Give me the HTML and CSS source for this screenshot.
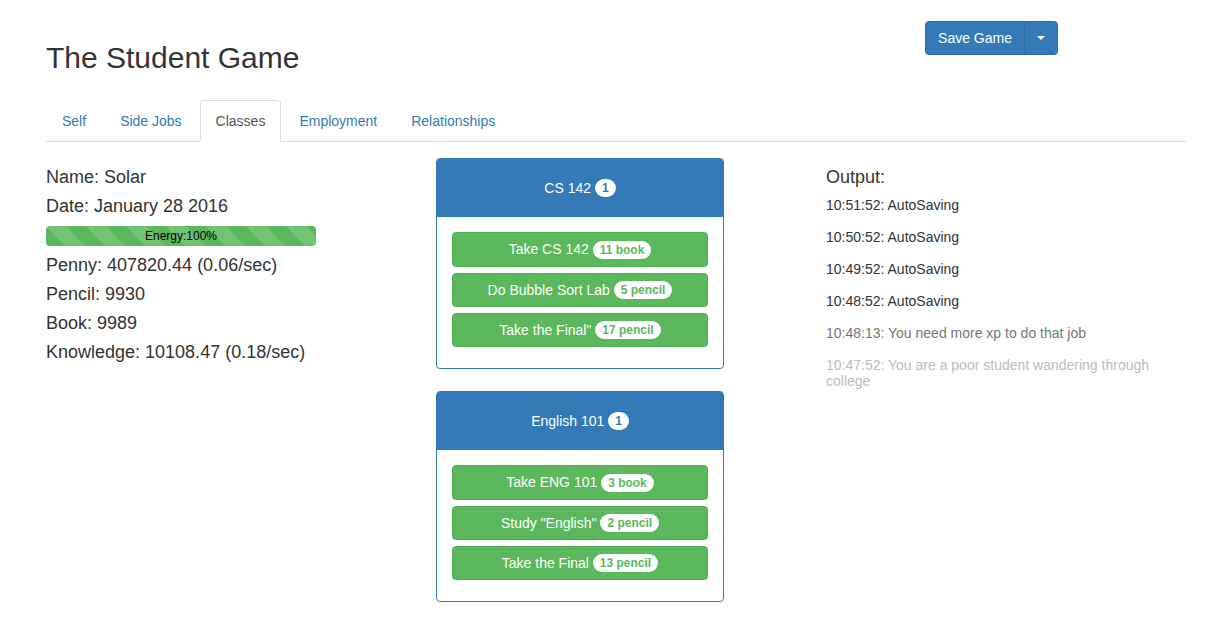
FILE: index.html
```html
<!DOCTYPE html>
<html>
<head>
<meta charset="utf-8">
<title>The Student Game</title>
<link rel="stylesheet" href="styles.css">
</head>
<body>
<div class="container">
  <header class="header">
    <h1 class="title">The Student Game</h1>
    <div class="btn-group">
      <button class="btn btn-primary btn-save">Save Game</button>
      <button class="btn btn-primary btn-toggle"><span class="caret"></span></button>
    </div>
  </header>

  <ul class="nav-tabs">
    <li class="tab"><a href="#">Self</a></li>
    <li class="tab"><a href="#">Side Jobs</a></li>
    <li class="tab active"><a href="#">Classes</a></li>
    <li class="tab"><a href="#">Employment</a></li>
    <li class="tab"><a href="#">Relationships</a></li>
  </ul>

  <div class="content">
    <div class="col stats">
      <div class="stat">Name: Solar</div>
      <div class="stat">Date: January 28 2016</div>
      <div class="progress"><div class="progress-bar" style="width:100%">Energy:100%</div></div>
      <div class="stat">Penny: 407820.44 (0.06/sec)</div>
      <div class="stat">Pencil: 9930</div>
      <div class="stat">Book: 9989</div>
      <div class="stat">Knowledge: 10108.47 (0.18/sec)</div>
    </div>

    <div class="col classes">
      <div class="panel">
        <div class="panel-heading">CS 142 <span class="badge badge-head">1</span></div>
        <div class="panel-body">
          <button class="btn btn-success">Take CS 142 <span class="badge badge-btn">11 book</span></button>
          <button class="btn btn-success">Do Bubble Sort Lab <span class="badge badge-btn">5 pencil</span></button>
          <button class="btn btn-success">Take the Final" <span class="badge badge-btn">17 pencil</span></button>
        </div>
      </div>
      <div class="panel">
        <div class="panel-heading">English 101 <span class="badge badge-head">1</span></div>
        <div class="panel-body">
          <button class="btn btn-success">Take ENG 101 <span class="badge badge-btn">3 book</span></button>
          <button class="btn btn-success">Study "English" <span class="badge badge-btn">2 pencil</span></button>
          <button class="btn btn-success">Take the Final <span class="badge badge-btn">13 pencil</span></button>
        </div>
      </div>
    </div>

    <div class="col output">
      <div class="stat">Output:</div>
      <p class="log">10:51:52: AutoSaving</p>
      <p class="log">10:50:52: AutoSaving</p>
      <p class="log">10:49:52: AutoSaving</p>
      <p class="log">10:48:52: AutoSaving</p>
      <p class="log log-old">10:48:13: You need more xp to do that job</p>
      <p class="log log-older">10:47:52: You are a poor student wandering through college</p>
    </div>
  </div>
</div>
</body>
</html>
```

FILE: styles.css
```css
* { box-sizing: border-box; }

html, body {
  margin: 0;
  padding: 0;
  background: #fff;
}

body {
  font-family: "Liberation Sans", Arial, Helvetica, sans-serif;
  font-size: 14px;
  line-height: 20px;
  color: #333;
}

.container {
  width: 1140px;
  margin-left: 46px;
}

.header {
  display: flex;
  justify-content: space-between;
  align-items: flex-start;
  padding-top: 21px;
  margin-bottom: 26px;
}

.title {
  margin: 20px 0 0 0;
  font-size: 30px;
  line-height: 33px;
  font-weight: 500;
  color: #333;
}

.btn-group {
  display: flex;
  margin-right: 128px;
}

.btn {
  font-family: inherit;
  font-size: 14px;
  line-height: 20px;
  padding: 6px 12px;
  border: 1px solid transparent;
  border-radius: 4px;
  cursor: pointer;
  color: #fff;
}

.btn-primary {
  background: #337ab7;
  border-color: #2e6da4;
}

.btn-save {
  border-radius: 4px 0 0 4px;
}

.btn-toggle {
  border-radius: 0 4px 4px 0;
  margin-left: -1px;
  padding: 6px 12px;
  display: flex;
  align-items: center;
}

.caret {
  display: inline-block;
  width: 0;
  height: 0;
  border-top: 4px solid #fff;
  border-left: 4px solid transparent;
  border-right: 4px solid transparent;
}

.nav-tabs {
  display: flex;
  list-style: none;
  margin: 0;
  padding: 0;
  border-bottom: 1px solid #ddd;
}

.tab {
  margin-bottom: -1px;
}

.tab a {
  display: block;
  padding: 10px 15px;
  line-height: 20px;
  margin-right: 2px;
  border: 1px solid transparent;
  border-radius: 4px 4px 0 0;
  color: #337ab7;
  text-decoration: none;
}

.tab.active a {
  color: #555;
  background: #fff;
  border-color: #ddd #ddd transparent;
}

.content {
  display: grid;
  grid-template-columns: 360px 360px 360px;
  column-gap: 30px;
  margin-top: 16px;
}

.stat {
  font-size: 18px;
  line-height: 19px;
  margin: 10px 0;
}

.progress {
  width: 270px;
  height: 20px;
  margin: 10px 0;
  background: #f5f5f5;
  border-radius: 4px;
  overflow: hidden;
}

.progress-bar {
  height: 20px;
  background-color: #5cb85c;
  background-image: linear-gradient(45deg, rgba(255,255,255,.15) 25%, transparent 25%, transparent 50%, rgba(255,255,255,.15) 50%, rgba(255,255,255,.15) 75%, transparent 75%, transparent);
  background-size: 40px 40px;
  color: #000;
  font-size: 12px;
  line-height: 20px;
  text-align: center;
}

.panel {
  width: 288px;
  border: 1px solid #337ab7;
  border-radius: 4px;
  margin-bottom: 22px;
  background: #fff;
}

.panel-heading {
  background: #337ab7;
  color: #fff;
  text-align: center;
  padding: 19px 15px;
  line-height: 20px;
  border-radius: 3px 3px 0 0;
}

.panel-body {
  padding: 15px 15px 21px 15px;
  display: flex;
  flex-direction: column;
  gap: 6px;
}

.btn-success {
  display: block;
  width: 100%;
  background: #5cb85c;
  border-color: #4cae4c;
  text-align: center;
}

.badge {
  display: inline-block;
  min-width: 10px;
  padding: 3px 7px;
  font-size: 12px;
  font-weight: bold;
  line-height: 1;
  border-radius: 10px;
  background: #fff;
  vertical-align: middle;
  text-align: center;
  white-space: nowrap;
  position: relative;
  top: -1px;
}

.badge-head {
  color: #337ab7;
}

.badge-btn {
  color: #5cb85c;
}

.log {
  font-size: 14px;
  line-height: 16px;
  margin: 0 0 16px 0;
  color: #333;
}

.log-old {
  color: #777;
}

.log-older {
  color: #bdbdbd;
}
```
